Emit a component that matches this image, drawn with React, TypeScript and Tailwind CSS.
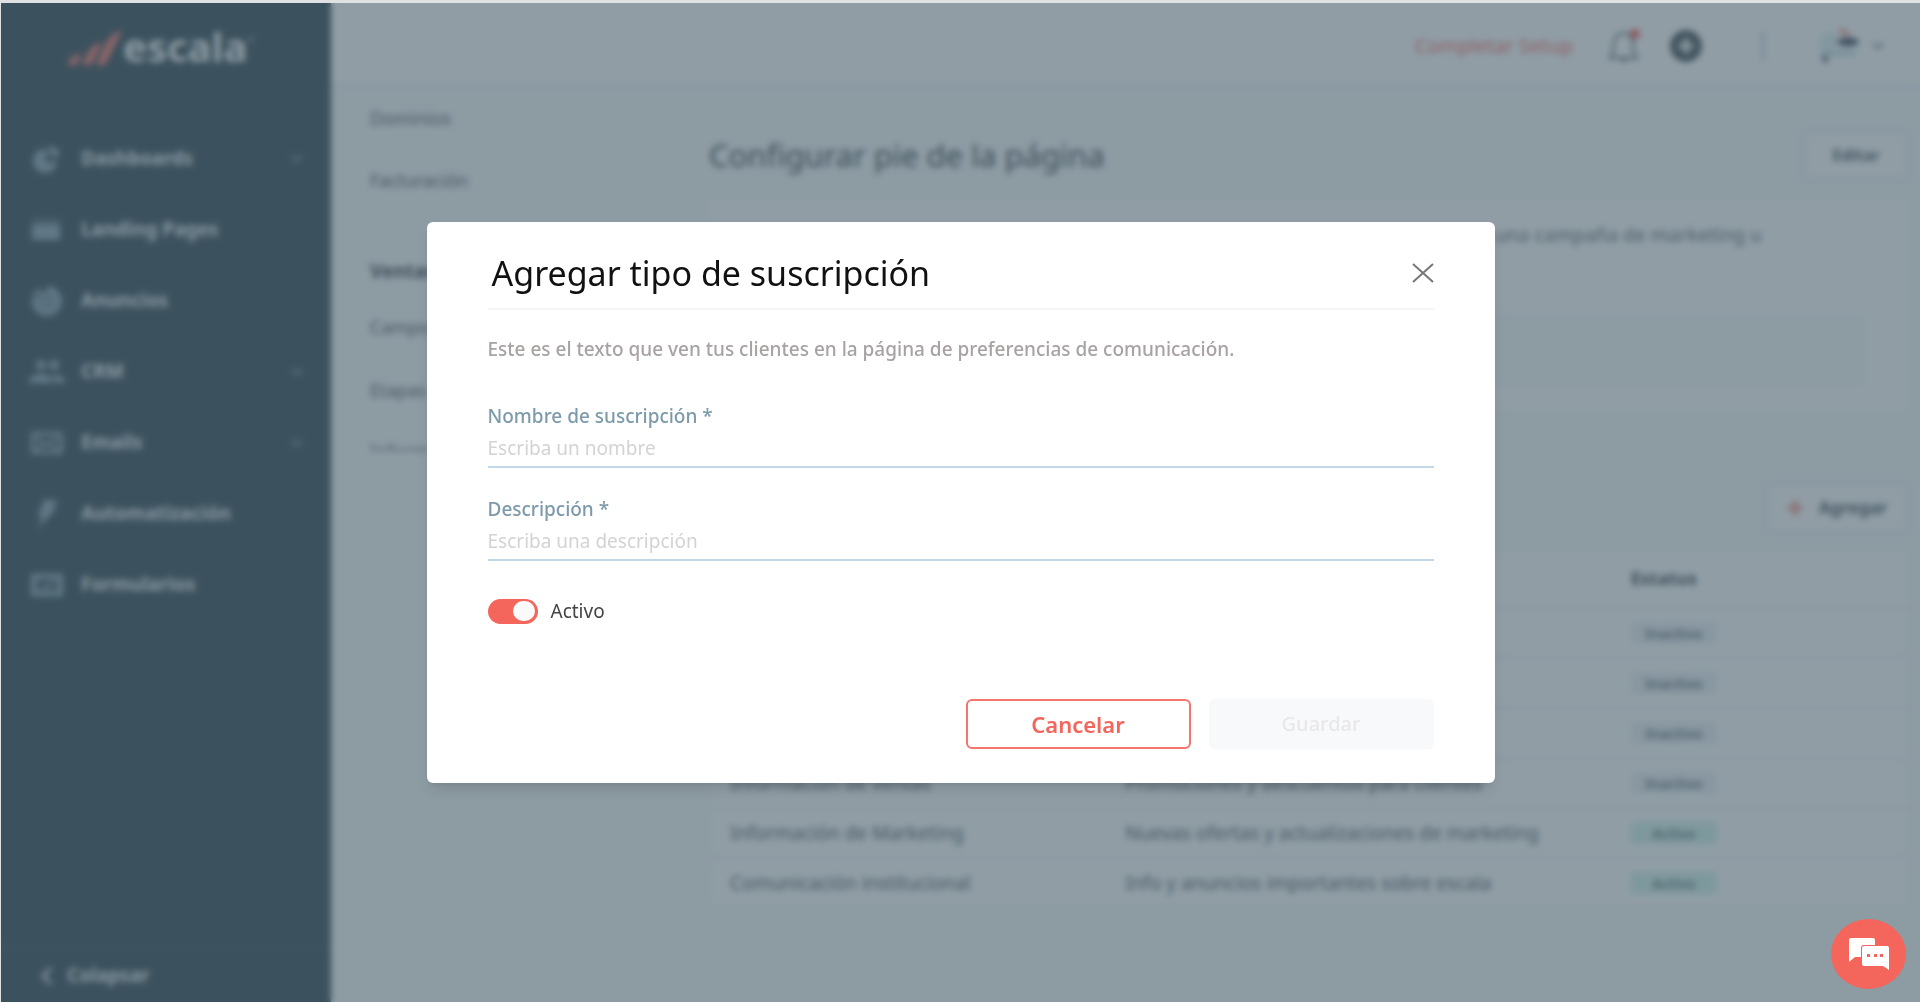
import React, { useState } from "react";

interface NavEntry {
  id: string;
  name: string;
  icon: React.ReactNode;
  hasChildren?: boolean;
}

const navItems: NavEntry[] = [
  {
    id: "dashboards",
    name: "Dashboards",
    hasChildren: true,
    icon: (
      <svg viewBox="0 0 32 28" className="w-8 h-7" fill="currentColor">
        <path d="M14 4a12 12 0 1 0 12 13l-4-1-5 2-3-4 3-5z" />
        <path d="M18 1a11 11 0 0 1 11 9l-5 3-6-5z" />
      </svg>
    ),
  },
  {
    id: "landing",
    name: "Landing Pages",
    icon: (
      <svg viewBox="0 0 32 28" className="w-8 h-7" fill="currentColor">
        <path d="M1 3h28v3H1z" opacity="0.5" />
        <path d="M1 8h28v16H1z" />
      </svg>
    ),
  },
  {
    id: "anuncios",
    name: "Anuncios",
    icon: (
      <svg viewBox="0 0 36 34" className="w-9 h-8" fill="currentColor">
        <path d="M18 1a16 16 0 1 1-15 10l6 3a10 10 0 1 0 9-6z" />
        <path d="M6 4l7 3 1 4-4 1-6-4z" />
        <circle cx="19" cy="18" r="11" opacity="0.8" />
      </svg>
    ),
  },
  {
    id: "crm",
    name: "CRM",
    hasChildren: true,
    icon: (
      <svg viewBox="0 0 36 24" className="w-9 h-6" fill="currentColor">
        <circle cx="12" cy="5" r="5" />
        <circle cx="25" cy="5" r="5" />
        <path d="M0 23c0-6 5-9 12-9s12 3 12 9zM26 23c0-4-1-6-3-8 7-1 13 2 13 8z" />
      </svg>
    ),
  },
  {
    id: "emails",
    name: "Emails",
    hasChildren: true,
    icon: (
      <svg
        viewBox="0 0 34 24"
        className="w-8 h-6"
        fill="none"
        stroke="currentColor"
        strokeWidth="4"
      >
        <rect x="2" y="2" width="30" height="20" rx="2" />
        <path d="M6 6l11 8 11-8M6 19l7-6M28 19l-7-6" strokeWidth="3" />
      </svg>
    ),
  },
  {
    id: "automatizacion",
    name: "Automatización",
    icon: (
      <svg viewBox="0 0 28 34" className="w-7 h-8" fill="currentColor">
        <path d="M11 2h15l-6 9h4L4 33l5-14H4z" />
      </svg>
    ),
  },
  {
    id: "formularios",
    name: "Formularios",
    icon: (
      <svg
        viewBox="0 0 34 24"
        className="w-8 h-6"
        fill="none"
        stroke="currentColor"
        strokeWidth="6"
      >
        <path d="M3 3h28v18H3z" />
        <path d="M11 12l4 3 10-6" strokeWidth="3" />
      </svg>
    ),
  },
];

interface SubscriptionRow {
  id: number;
  name: string;
  description: string;
  active: boolean;
}

const rows: SubscriptionRow[] = [
  { id: 1, name: "", description: "", active: false },
  { id: 2, name: "", description: "", active: false },
  { id: 3, name: "", description: "", active: false },
  {
    id: 4,
    name: "Información de ventas",
    description: "Promociones y descuentos para clientes",
    active: false,
  },
  {
    id: 5,
    name: "Información de Marketing",
    description: "Nuevas ofertas y actualizaciones de marketing",
    active: true,
  },
  {
    id: 6,
    name: "Comunicación institucional",
    description: "Info y anuncios importantes sobre escala",
    active: true,
  },
];

const ChevronDown = () => (
  <svg
    viewBox="0 0 12 8"
    className="w-3 h-2"
    fill="none"
    stroke="currentColor"
    strokeWidth="2"
  >
    <path d="M1 1l5 5 5-5" />
  </svg>
);

const Sidebar = () => (
  <aside className="w-[330px] shrink-0 bg-[#162f3a] flex flex-col">
    <div className="flex items-center h-[92px] pl-[66px]">
      <svg viewBox="0 0 56 36" className="w-14 h-9" fill="#f4655c">
        <path d="M1 34c1-6 4-10 14-11l-6 11zM15 34C21 22 23 13 35 12L24 34zM29 34C37 18 40 2 55 0L38 34z" />
      </svg>
      <span className="text-[40px] leading-10 font-bold text-[#eef2f4] pb-1">
        escala
      </span>
      <span className="text-[8px] text-white pb-4">™</span>
    </div>
    <nav className="flex flex-col pt-7">
      {navItems.map((item) => (
        <a
          key={item.id}
          href="#"
          className="flex items-center h-[71px] pl-7 pr-7 text-[#e4eaed]"
        >
          <span className="w-9 mr-4 flex items-center justify-center text-[#7c97a9]">
            {item.icon}
          </span>
          <span className="text-[19px] font-bold">{item.name}</span>
          {item.hasChildren && (
            <span className="ml-auto text-[#748b97]">
              <ChevronDown />
            </span>
          )}
        </a>
      ))}
    </nav>
    <button
      type="button"
      className="mt-auto h-[54px] border-t border-[#294552] flex items-center gap-[14px] pl-10 text-[#e4eaed] text-[19px] font-bold"
    >
      <svg
        viewBox="0 0 12 20"
        className="w-3 h-5"
        fill="none"
        stroke="currentColor"
        strokeWidth="3"
      >
        <path d="M10 2l-8 8 8 8" />
      </svg>
      Colapsar
    </button>
  </aside>
);

const TopBar = () => (
  <header className="h-[84px] shrink-0 bg-white border-b-2 border-[#e3e9ed] flex items-center justify-end pr-9 pt-1">
    <a href="#" className="text-xl text-[#f4554c] mr-[34px]">
      Completar Setup
    </a>
    <button type="button" aria-label="Notificaciones" className="mr-7">
      <svg
        viewBox="0 0 34 34"
        className="w-[34px] h-[34px]"
        fill="none"
        stroke="#33424b"
        strokeWidth="2"
      >
        <path d="M3 29c4-4 3-8 4-15C8 7 11 4 16 4s9 3 10 10c0 7 0 11 4 15z" />
        <path d="M14 31h6" />
        <circle cx="28" cy="5" r="5" fill="#f4453c" stroke="none" />
      </svg>
    </button>
    <button type="button" aria-label="Crear" className="mr-[59px]">
      <svg viewBox="0 0 34 32" className="w-[34px] h-8">
        <circle cx="17" cy="16" r="16" fill="#2a363d" />
        <path d="M17 8v16M9 16h16" stroke="#fff" strokeWidth="4" />
      </svg>
    </button>
    <span className="w-0.5 h-8 bg-[#a3b1b9] mr-[54px]" />
    <button type="button" aria-label="Cuenta" className="flex items-center gap-3">
      <svg viewBox="0 0 42 40" className="w-[42px] h-10">
        <path d="M2 12c6-8 16-6 18-2l-4 14h22v6H4z" fill="#d8eef0" />
        <path d="M18 2l9 1 6 7-5 1z" fill="#f4857c" />
        <ellipse cx="30" cy="16" rx="11" ry="4" fill="#14233c" />
        <path d="M3 27h34" stroke="#a3d3d7" strokeWidth="3" />
        <path d="M4 30l6 1-1 6-4-2z" fill="#14233c" />
      </svg>
      <span className="text-[#52626b]">
        <ChevronDown />
      </span>
    </button>
  </header>
);

const SettingsMenu = () => (
  <nav className="w-[378px] h-[364px] shrink-0 overflow-hidden pl-[39px] text-lg text-[#33424b]">
    <a href="#" className="flex items-center h-[62px]">
      Dominios
    </a>
    <a href="#" className="flex items-center h-[62px]">
      Facturación
    </a>
    <h2 className="flex items-end h-[72px] text-[19px] leading-6 font-bold text-[#1c2a32]">
      Ventas
    </h2>
    <a href="#" className="flex items-center h-[88px]">
      Campos
    </a>
    <a href="#" className="flex items-center h-[38px]">
      Etapas
    </a>
    <a href="#" className="flex items-center h-[84px]">
      Información
    </a>
  </nav>
);

const StatusPill = ({ active }: { active: boolean }) => (
  <span
    className={`flex items-center justify-center w-[86px] h-[22px] rounded text-[15px] font-medium text-[#33424b] ${
      active ? "bg-[#cdf3ea]" : "bg-[#e9eef3]"
    }`}
  >
    {active ? "Activo" : "Inactivo"}
  </span>
);

const SettingsContent = () => (
  <main className="flex-1 min-w-0 pr-[11px] pt-[43px] text-[#33424b]">
    <div className="flex items-center justify-between">
      <h1 className="text-[31px] leading-9 text-[#1c2a32]">
        Configurar pie de la página
      </h1>
      <button
        type="button"
        className="w-[106px] h-[50px] bg-white border-2 border-[#d5e2ec] rounded-md text-base font-bold"
      >
        Editar
      </button>
    </div>

    <section className="mt-[19px] h-[211px] bg-white px-5 pt-6 pb-6 flex flex-col justify-between">
      <p className="text-[19px] leading-6 text-right pr-[127px] text-[#5f6c75] font-medium">
        una campaña de marketing u
      </p>
      <div className="h-[72px] mr-6 bg-[#f5f8fa]" />
    </section>

    <div className="flex justify-end mt-[73px]">
      <button
        type="button"
        className="w-[144px] h-[50px] bg-white border-2 border-[#d5e2ec] rounded-md flex items-center justify-center gap-4 text-[17px] font-bold"
      >
        <svg viewBox="0 0 16 16" className="w-4 h-4" stroke="#f4655c" strokeWidth="3">
          <path d="M8 0v16M0 8h16" />
        </svg>
        Agregar
      </button>
    </div>

    <table className="w-full mt-4 bg-white border border-[#e3e9ed] text-left">
      <thead>
        <tr className="h-[58px] text-lg text-[#1c2a32]">
          <th className="w-[33%] pl-5 font-bold">Nombre</th>
          <th className="w-[42%] pl-5 font-bold">Descripción</th>
          <th className="pl-[22px] font-bold">Estatus</th>
        </tr>
      </thead>
      <tbody>
        {rows.map((row) => (
          <tr key={row.id} className="h-[50px] border-t-2 border-[#e3e9ed] text-[19px] leading-6">
            <td className="pl-5">{row.name}</td>
            <td className="pl-5">{row.description}</td>
            <td className="pl-[22px]">
              <StatusPill active={row.active} />
            </td>
          </tr>
        ))}
      </tbody>
    </table>
  </main>
);

interface FieldProps {
  id: string;
  label: string;
  placeholder: string;
}

const Field = ({ id, label, placeholder }: FieldProps) => (
  <div className="flex flex-col h-[93px]">
    <label htmlFor={id} className="text-[19px] leading-8 font-medium text-[#7d9aaa]">
      {label} *
    </label>
    <input
      id={id}
      type="text"
      placeholder={placeholder}
      className="h-9 pb-0.5 border-b-2 border-[#c3d8e6] text-[19px] outline-none placeholder:text-[#d3d3d3]"
    />
  </div>
);

const SubscriptionModal = () => {
  const [active, setActive] = useState(true);

  return (
    <div
      role="dialog"
      aria-labelledby="modal-title"
      className="w-full max-w-[1068px] bg-white rounded-md px-[61px] pt-[15px] pb-[34px] shadow-lg"
    >
      <div className="flex items-center justify-between h-[73px] border-b-2 border-[#f5f5f5] pl-1">
        <h2 id="modal-title" className="text-[34px] leading-10 text-[#111111]">
          Agregar tipo de suscripción
        </h2>
        <button type="button" aria-label="Cerrar">
          <svg
            viewBox="0 0 22 20"
            className="w-[22px] h-5"
            stroke="#777777"
            strokeWidth="2"
          >
            <path d="M1 1l20 18M21 1L1 19" />
          </svg>
        </button>
      </div>

      <p className="pt-[25px] text-[19px] leading-7 font-medium text-[#a8a2a2]">
        Este es el texto que ven tus clientes en la página de preferencias de
        comunicación.
      </p>

      <form className="pt-[37px]">
        <Field
          id="nombre"
          label="Nombre de suscripción"
          placeholder="Escriba un nombre"
        />
        <Field
          id="descripcion"
          label="Descripción"
          placeholder="Escriba una descripción"
        />

        <label className="inline-flex items-center gap-[13px] mt-[11px] h-7 text-[19px] text-[#444444]">
          <input
            type="checkbox"
            checked={active}
            onChange={() => setActive(!active)}
            className="peer sr-only"
          />
          <span className="flex items-center justify-start peer-checked:justify-end w-[50px] h-[25px] px-[3px] rounded-full bg-gray-300 peer-checked:bg-[#f4655c]">
            <span className="w-[22px] h-5 rounded-full bg-[#fafafa]" />
          </span>
          Activo
        </label>

        <div className="flex justify-end gap-[18px] mt-[72px]">
          <button
            type="button"
            className="w-[225px] h-[50px] rounded-md border-2 border-[#f4756d] text-[22px] leading-6 font-semibold text-[#f4655c]"
          >
            Cancelar
          </button>
          <button
            type="submit"
            disabled
            className="w-[225px] h-[50px] rounded-md bg-[#f8f9fb] text-[20px] font-medium text-[#e8e8e8]"
          >
            Guardar
          </button>
        </div>
      </form>
    </div>
  );
};

const ChatButton = () => (
  <button
    type="button"
    aria-label="Chat"
    className="fixed right-[14px] bottom-[13px] w-[75px] h-[70px] rounded-[50%] bg-[#f4655c] flex items-center justify-center"
  >
    <svg viewBox="0 0 40 32" className="w-10 h-8">
      <path
        d="M2 0h22a2 2 0 0 1 2 2v15a2 2 0 0 1-2 2H6l-6 5V2a2 2 0 0 1 2-2z"
        fill="#fff"
      />
      <path
        d="M15 8h23a2 2 0 0 1 2 2v22l-6-4H15a2 2 0 0 1-2-2V10a2 2 0 0 1 2-2z"
        fill="#fff"
        stroke="#f4655c"
        strokeWidth="2"
        paintOrder="stroke"
      />
      <path d="M18 16h3v3h-3zM25 16h3v3h-3zM31 16h3v3h-3z" fill="#f4655c" />
    </svg>
  </button>
);

const App = () => (
  <div className="relative h-screen overflow-hidden border-t-[3px] border-l border-[#dfe1e2] font-['Noto_Sans',sans-serif]">
    <div className="flex h-full bg-[#f6f8f9]">
      <Sidebar />
      <div className="flex-1 min-w-0 flex flex-col">
        <TopBar />
        <div className="flex flex-1 min-h-0">
          <SettingsMenu />
          <SettingsContent />
        </div>
      </div>
    </div>
    <div className="absolute inset-0 flex items-center justify-center bg-[#526672]/64 backdrop-blur-[3px]">
      <SubscriptionModal />
    </div>
    <ChatButton />
  </div>
);

export default App;
